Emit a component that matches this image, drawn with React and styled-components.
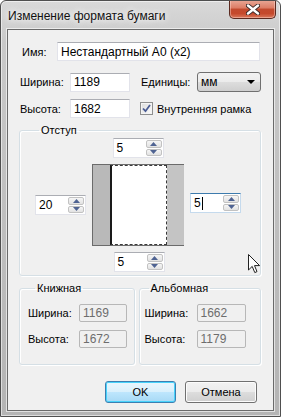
import React from 'react'
import styled, { createGlobalStyle } from 'styled-components'

const GlobalStyle = createGlobalStyle`
  html, body {
    margin: 0;
    padding: 0;
    background: #fff;
  }
  body {
    font-family: "Liberation Sans", Arial, sans-serif;
    font-size: 11px;
    color: #000;
  }
`

const Spinner = ({ value, focused }) => (
  <SpinBox $focused={focused}>
    <SpinText>
      {value}
      {focused && <Caret />}
    </SpinText>
    <SpinButtons>
      <SpinBtn>
        <svg width="7" height="4" viewBox="0 0 7 4"><path d="M0 4 L3.5 0 L7 4 Z" fill="#4f6392" /></svg>
      </SpinBtn>
      <SpinBtn>
        <svg width="7" height="4" viewBox="0 0 7 4"><path d="M0 0 L7 0 L3.5 4 Z" fill="#4f6392" /></svg>
      </SpinBtn>
    </SpinButtons>
  </SpinBox>
)

const App = () => {
  return (
    <>
      <GlobalStyle />
      <Window>
        <TitleBar>
          <Title>Изменение формата бумаги</Title>
          <CloseButton>
            <svg width="14" height="11" viewBox="0 0 14 11">
              <path d="M2 1.5 L12 9.5 M12 1.5 L2 9.5" stroke="#3a2a28" strokeWidth="4.2" strokeLinecap="round" />
              <path d="M2 1.5 L12 9.5 M12 1.5 L2 9.5" stroke="#fff" strokeWidth="2.4" strokeLinecap="round" />
            </svg>
          </CloseButton>
        </TitleBar>

        <Client>
          <NameRow>
            <Label $w={35}>Имя:</Label>
            <TextBox $w={203} defaultValue="Нестандартный А0 (х2)" />
          </NameRow>

          <SizeGrid>
            <Label>Ширина:</Label>
            <TextBox $w={60} defaultValue="1189" />
            <Label>Единицы:</Label>
            <Select>
              <span>мм</span>
              <svg width="8" height="4" viewBox="0 0 8 4"><path d="M0 0 L8 0 L4 4 Z" fill="#000" /></svg>
            </Select>
            <Label>Высота:</Label>
            <TextBox $w={60} defaultValue="1682" />
            <CheckRow>
              <CheckBox>
                <svg width="9" height="9" viewBox="0 0 9 9">
                  <path d="M1 4.5 L3.5 7.2 L8 1" stroke="#4a5c94" strokeWidth="1.8" fill="none" />
                </svg>
              </CheckBox>
              <span>Внутренняя рамка</span>
            </CheckRow>
          </SizeGrid>

          <Group $mt={5} $pt={1} $pb={3}>
            <Legend>Отступ</Legend>
            <MarginGrid>
              <Cell $col={2} $row={1}><Spinner value="5" /></Cell>
              <Cell $col={1} $row={2}><Spinner value="20" /></Cell>
              <Sheet>
                <Page />
              </Sheet>
              <Cell $col={3} $row={2} $shift={-4}><Spinner value="5" focused /></Cell>
              <Cell $col={2} $row={3} $nudge={2}><Spinner value="5" /></Cell>
            </MarginGrid>
          </Group>

          <OrientRow>
            <Group $w={116} $pt={9} $pb={16} $pl={8}>
              <Legend $ml={7}>Книжная</Legend>
              <ReadGrid>
                <Label>Ширина:</Label>
                <ReadBox>1169</ReadBox>
                <Label>Высота:</Label>
                <ReadBox>1672</ReadBox>
              </ReadGrid>
            </Group>
            <Group $w={123} $pt={9} $pb={16} $pl={5}>
              <Legend>Альбомная</Legend>
              <ReadGrid $lw={52}>
                <Label>Ширина:</Label>
                <ReadBox $w={49}>1662</ReadBox>
                <Label>Высота:</Label>
                <ReadBox $w={49}>1179</ReadBox>
              </ReadGrid>
            </Group>
          </OrientRow>

          <ButtonRow>
            <Button $default $w={71}>OK</Button>
            <Button $w={72}>Отмена</Button>
          </ButtonRow>
        </Client>

        <Cursor width="13" height="20" viewBox="0 0 13 20">
          <path d="M0.5 0.5 L0.5 16 L4.2 12.4 L6.8 18.6 L9 17.6 L6.5 11.6 L11.6 11.6 Z" fill="#fff" stroke="#222" strokeWidth="1" strokeLinejoin="round" />
        </Cursor>
      </Window>
    </>
  )
}

export default App

const Window = styled.div`
  position: relative;
  width: 281px;
  height: 417px;
  box-sizing: border-box;
  display: flex;
  flex-direction: column;
  border: 1px solid #4f4f4f;
  border-radius: 6px 6px 0 0;
  background: linear-gradient(to bottom, #d9d9d9 0%, #c9c9c9 10%, #bdbdbd 60%, #b4b4b4 100%);
  box-shadow: inset 0 0 0 1px rgba(255, 255, 255, 0.55);
  overflow: hidden;
`

const TitleBar = styled.div`
  height: 28px;
  display: flex;
  align-items: flex-start;
  justify-content: space-between;
  padding: 0 4px 0 7px;
`

const Title = styled.div`
  font-size: 12px;
  margin-top: 8px;
  color: #111;
  text-shadow: 0 0 6px #fff, 0 0 10px #fff;
`

const CloseButton = styled.div`
  width: 47px;
  height: 19px;
  margin-top: -1px;
  box-sizing: border-box;
  display: flex;
  align-items: center;
  justify-content: center;
  border: 1px solid #5b2a20;
  border-top: none;
  border-radius: 0 0 5px 5px;
  background: linear-gradient(to bottom, #e9a998 0%, #dc7c64 45%, #c24a2e 50%, #c5492c 75%, #d9785c 100%);
  box-shadow: inset 0 0 0 1px rgba(255, 220, 210, 0.45);
`

const Client = styled.div`
  flex: 1;
  margin: 0 6px 5px 6px;
  border: 1px solid #6a6a6a;
  box-shadow: 0 0 0 1px rgba(255, 255, 255, 0.6);
  background: #f0f0f0;
  display: flex;
  flex-direction: column;
  padding: 12px 12px 0 11px;
`

const NameRow = styled.div`
  display: flex;
  align-items: center;
  padding-left: 3px;
`

const Label = styled.span`
  width: ${p => (p.$w ? `${p.$w}px` : 'auto')};
  flex-shrink: 0;
  white-space: nowrap;
`

const TextBox = styled.input`
  width: ${p => p.$w}px;
  height: 19px;
  box-sizing: border-box;
  margin: 0;
  padding: 0 3px;
  font: inherit;
  font-size: 12px;
  color: #000;
  background: #fff;
  border: 1px solid #e2e3ea;
  border-top-color: #abadb3;
  outline: none;
`

const SizeGrid = styled.div`
  display: grid;
  grid-template-columns: 50px 71px 56px 64px;
  row-gap: 7px;
  align-items: center;
  margin-top: 11px;
  padding-left: 1px;
`

const Select = styled.div`
  height: 20px;
  box-sizing: border-box;
  display: flex;
  align-items: center;
  justify-content: space-between;
  padding: 0 5px 0 3px;
  font-size: 12px;
  border: 1px solid #707070;
  border-radius: 3px;
  background: linear-gradient(to bottom, #f2f2f2 0%, #ebebeb 50%, #dddddd 51%, #cfcfcf 100%);
`

const CheckRow = styled.label`
  grid-column: 3 / span 2;
  display: flex;
  align-items: center;
  gap: 4px;
  margin-left: -1px;
  white-space: nowrap;
`

const CheckBox = styled.span`
  width: 13px;
  height: 13px;
  box-sizing: border-box;
  display: flex;
  align-items: center;
  justify-content: center;
  border: 1px solid #8e8f8f;
  background: linear-gradient(135deg, #dcdcdc, #fbfbfb);
  box-shadow: inset 0 0 0 1px #f4f4f4;
`

const Group = styled.fieldset`
  margin: ${p => p.$mt ?? 0}px 0 0 0;
  min-width: 0;
  width: ${p => (p.$w ? `${p.$w}px` : 'auto')};
  box-sizing: border-box;
  padding: ${p => p.$pt}px 4px ${p => p.$pb}px ${p => p.$pl ?? 15}px;
  border: 1px solid #d5dfe5;
  border-radius: 3px;
  box-shadow: inset 1px 1px 0 #fff, 1px 1px 0 #fff;
`

const Legend = styled.legend`
  padding: 0 2px;
  margin-left: ${p => p.$ml ?? 4}px;
  line-height: 14px;
  font-weight: normal;
`

const MarginGrid = styled.div`
  display: grid;
  grid-template-columns: 51px 92px 51px;
  grid-template-rows: 20px 82px 20px;
  column-gap: 6px;
  row-gap: 6px;
  align-items: center;
`

const Cell = styled.div`
  grid-column: ${p => p.$col};
  grid-row: ${p => p.$row};
  display: flex;
  justify-content: center;
  margin-top: ${p => p.$shift ?? 0}px;
  margin-left: ${p => p.$nudge ?? 0}px;
`

const Sheet = styled.div`
  grid-column: 2;
  grid-row: 2;
  height: 82px;
  box-sizing: border-box;
  display: flex;
  padding-left: 17px;
  background: linear-gradient(to right, #b9b9b9 0%, #b9b9b9 20%, #c4c4c4 20%);
  border: 1px solid #6b6b6b;
  border-right: none;
`

const Page = styled.div`
  width: 57px;
  box-sizing: border-box;
  background: #fff;
  border: 1px dashed #3a3a3a;
  border-left: 2px solid #1a1a1a;
`

const SpinBox = styled.div`
  width: 51px;
  height: 20px;
  box-sizing: border-box;
  display: flex;
  background: #fff;
  border: 1px solid ${p => (p.$focused ? '#c5daed' : '#e2e3ea')};
  border-top-color: ${p => (p.$focused ? '#3d7bad' : '#abadb3')};
  padding: 1px;
`

const SpinText = styled.div`
  flex: 1;
  display: flex;
  align-items: center;
  padding-left: 2px;
  font-size: 12px;
`

const Caret = styled.span`
  width: 1px;
  height: 13px;
  background: #000;
  margin-left: 1px;
`

const SpinButtons = styled.div`
  width: 16px;
  display: flex;
  flex-direction: column;
  gap: 1px;
`

const SpinBtn = styled.div`
  flex: 1;
  display: flex;
  align-items: center;
  justify-content: center;
  border: 1px solid #c2c2c2;
  border-radius: 2px;
  background: linear-gradient(to bottom, #f6f6f6, #e2e2e2);
`

const OrientRow = styled.div`
  display: flex;
  gap: 4px;
  margin-top: 5px;
`

const ReadGrid = styled.div`
  display: grid;
  grid-template-columns: ${p => p.$lw ?? 51}px auto;
  row-gap: 8px;
  align-items: center;
`

const ReadBox = styled.div`
  width: ${p => p.$w ?? 48}px;
  height: 18px;
  box-sizing: border-box;
  display: flex;
  align-items: center;
  padding-left: 3px;
  font-size: 12px;
  color: #6d6d6d;
  border: 1px solid #b7b7b7;
  border-radius: 2px;
  background: #f0f0f0;
`

const ButtonRow = styled.div`
  display: flex;
  justify-content: flex-end;
  gap: 9px;
  margin-top: 16px;
  padding-right: 4px;
`

const Button = styled.div`
  width: ${p => p.$w}px;
  height: 22px;
  box-sizing: border-box;
  display: flex;
  align-items: center;
  justify-content: center;
  font-size: 11px;
  border: 1px solid ${p => (p.$default ? '#3c7fb1' : '#707070')};
  border-radius: 3px;
  background: ${p =>
    p.$default
      ? 'linear-gradient(to bottom, #eaf6fd 0%, #d9f0fc 50%, #bee6fd 51%, #a7d9f5 100%)'
      : 'linear-gradient(to bottom, #f2f2f2 0%, #ebebeb 50%, #dddddd 51%, #cfcfcf 100%)'};
  box-shadow: inset 0 0 0 1px ${p => (p.$default ? '#48d3fb' : '#fcfcfc')};
`

const Cursor = styled.svg`
  position: absolute;
  left: 247px;
  top: 253px;
`
